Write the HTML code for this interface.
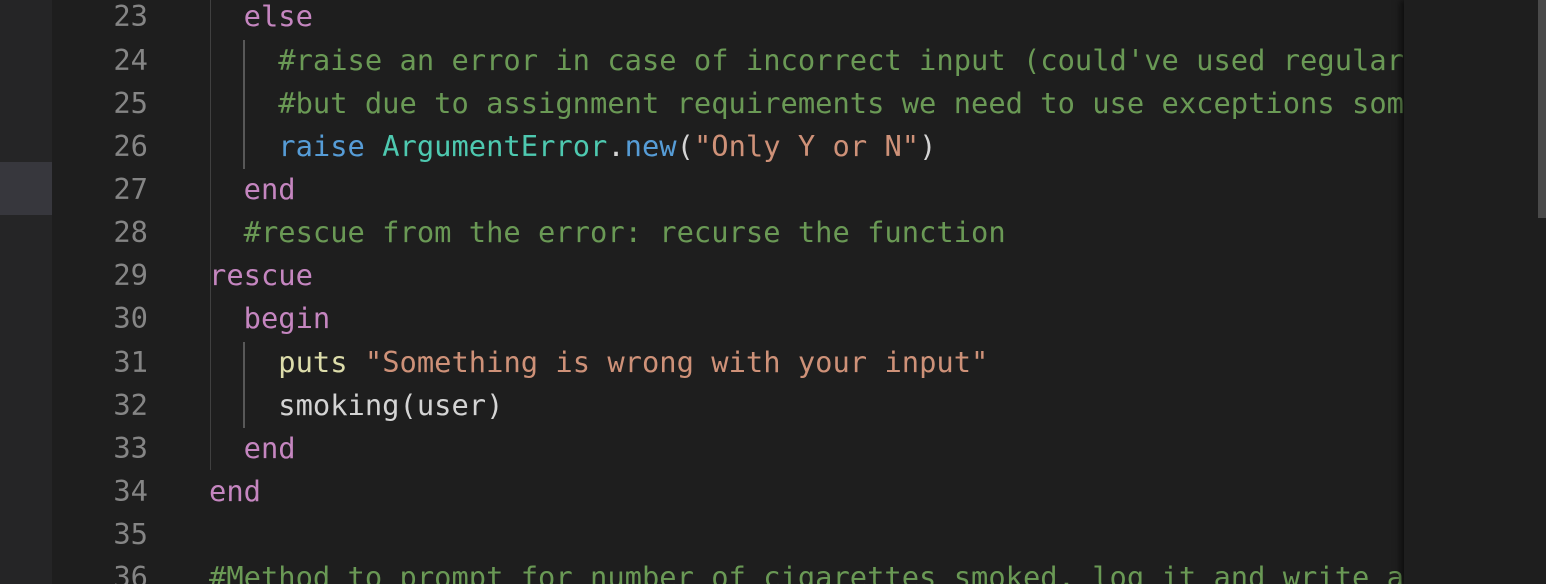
<!DOCTYPE html>
<html><head><meta charset="utf-8"><style>
html,body{margin:0;padding:0;width:1546px;height:584px;overflow:hidden;background:#1e1e1e;}
.side{position:absolute;left:0;top:0;width:52px;height:584px;background:#252526;}
.hl{position:absolute;left:0;top:162px;width:52px;height:53px;background:#37373d;}
.ln{position:absolute;left:52px;width:96px;text-align:right;color:#858585;}
.code{position:absolute;left:209px;white-space:pre;}
.ln,.code{font-family:"DejaVu Sans Mono","Liberation Mono",monospace;font-size:28.77px;line-height:43.15px;height:43.15px;}
.k{color:#c586c0}.c{color:#6a9955}.b{color:#569cd6}.t{color:#4ec9b0}.s{color:#ce9178}.f{color:#dcdcaa}.d{color:#d4d4d4}
.g{position:absolute;width:1px;background:#404040;}
.ga{position:absolute;width:2px;background:#585858;}
.mini{position:absolute;left:1404px;top:0;width:142px;height:584px;background:#1e1e1e;box-shadow:-4px 0 6px rgba(0,0,0,0.5);}
.sb{position:absolute;left:1538px;top:0;width:8px;height:218px;background:#4a4a4a;}
</style></head><body>
<div class="side"></div><div class="hl"></div>
<div class="g" style="left:210px;top:0;height:470px"></div>
<div class="ga" style="left:243px;top:40px;height:129px"></div>
<div class="ga" style="left:243px;top:342px;height:86px"></div>
<div style="position:absolute;left:0;top:-4.6px;width:1404px;height:588.6px;overflow:hidden">
<div class="ln" style="top:0">23</div><div class="code" style="top:0">  <span class="k">else</span></div>
<div class="ln" style="top:43.15px">24</div><div class="code c" style="top:43.15px">    #raise an error in case of incorrect input (could've used regular expressions</div>
<div class="ln" style="top:86.3px">25</div><div class="code c" style="top:86.3px">    #but due to assignment requirements we need to use exceptions somewhere</div>
<div class="ln" style="top:129.45px">26</div><div class="code" style="top:129.45px">    <span class="b">raise</span> <span class="t">ArgumentError</span><span class="d">.</span><span class="b">new</span><span class="d">(</span><span class="s">"Only Y or N"</span><span class="d">)</span></div>
<div class="ln" style="top:172.6px">27</div><div class="code" style="top:172.6px">  <span class="k">end</span></div>
<div class="ln" style="top:215.75px">28</div><div class="code c" style="top:215.75px">  #rescue from the error: recurse the function</div>
<div class="ln" style="top:258.9px">29</div><div class="code k" style="top:258.9px">rescue</div>
<div class="ln" style="top:302.05px">30</div><div class="code k" style="top:302.05px">  begin</div>
<div class="ln" style="top:345.2px">31</div><div class="code" style="top:345.2px">    <span class="f">puts</span> <span class="s">"Something is wrong with your input"</span></div>
<div class="ln" style="top:388.35px">32</div><div class="code d" style="top:388.35px">    smoking(user)</div>
<div class="ln" style="top:431.5px">33</div><div class="code k" style="top:431.5px">  end</div>
<div class="ln" style="top:474.65px">34</div><div class="code k" style="top:474.65px">end</div>
<div class="ln" style="top:517.8px">35</div>
<div class="ln" style="top:560.95px">36</div><div class="code c" style="top:560.95px">#Method to prompt for number of cigarettes smoked, log it and write a file</div>
</div>
<div class="mini"></div><div class="sb"></div>
</body></html>
